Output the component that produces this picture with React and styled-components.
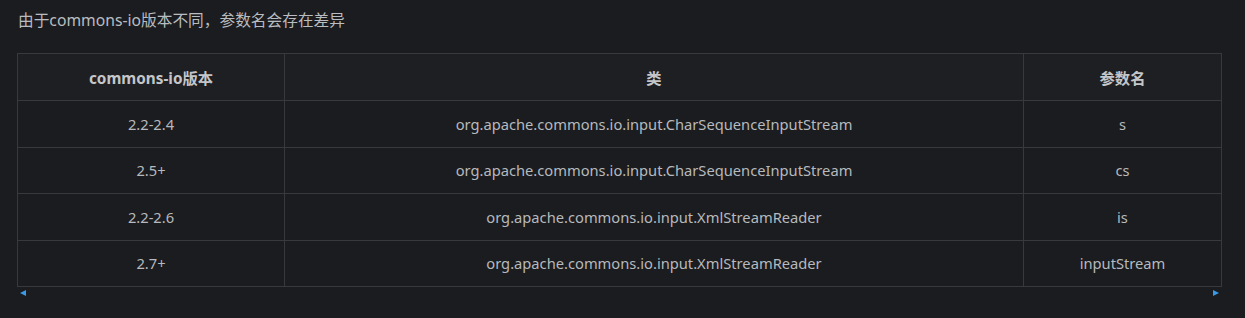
import React from 'react';
import styled, { createGlobalStyle } from 'styled-components';

const GlobalStyle = createGlobalStyle`
  html, body {
    margin: 0;
    padding: 0;
    background: #1b1c1f;
  }
  body {
    font-family: "Noto Sans", "Noto Sans CJK SC", sans-serif;
    color: #b9bcc0;
  }
`;

const Page = styled.div`
  width: 1245px;
  height: 318px;
  box-sizing: border-box;
  padding: 8px 23px 0 17px;
  background: #1b1c1f;
`;

const Intro = styled.p`
  margin: 0 0 0 1px;
  font-size: 15.7px;
  line-height: 24px;
  color: #b9bcc0;
`;

const TableWrap = styled.div`
  margin-top: 21px;
  width: 1205px;
`;

const Table = styled.table`
  width: 1205px;
  border-collapse: collapse;
  table-layout: fixed;
  font-size: 14.7px;
`;

const Th = styled.th`
  ${p => (p.w ? `width: ${p.w}px;` : '')}
  height: 46px;
  padding: 0;
  border: 1px solid #38393c;
  background: #1e1f22;
  color: #c4c6c9;
  font-size: 15.3px;
  font-weight: 700;
  text-align: center;
`;

const Td = styled.td`
  height: 45.5px;
  padding: 0;
  border: 1px solid #38393c;
  color: #b6b9bd;
  text-align: center;
`;

const ScrollBar = styled.div`
  display: flex;
  justify-content: space-between;
  align-items: center;
  height: 11px;
  padding: 0 3px;
`;

const Arrow = styled.span`
  width: 0;
  height: 0;
  border-top: 3.5px solid transparent;
  border-bottom: 3.5px solid transparent;
  ${p => (p.dir === 'left'
    ? 'border-right: 6px solid #3a9ae8;'
    : 'border-left: 6px solid #3a9ae8;')}
`;

const rows = [
  ['2.2-2.4', 'org.apache.commons.io.input.CharSequenceInputStream', 's'],
  ['2.5+', 'org.apache.commons.io.input.CharSequenceInputStream', 'cs'],
  ['2.2-2.6', 'org.apache.commons.io.input.XmlStreamReader', 'is'],
  ['2.7+', 'org.apache.commons.io.input.XmlStreamReader', 'inputStream'],
];

export default function App() {
  return (
    <Page>
      <GlobalStyle />
      <Intro>由于commons-io版本不同，参数名会存在差异</Intro>
      <TableWrap>
        <Table>
          <thead>
            <tr>
              <Th w={266}>commons-io版本</Th>
              <Th>类</Th>
              <Th w={197}>参数名</Th>
            </tr>
          </thead>
          <tbody>
            {rows.map((r, i) => (
              <tr key={i}>
                <Td>{r[0]}</Td>
                <Td>{r[1]}</Td>
                <Td>{r[2]}</Td>
              </tr>
            ))}
          </tbody>
        </Table>
        <ScrollBar>
          <Arrow dir="left" />
          <Arrow dir="right" />
        </ScrollBar>
      </TableWrap>
    </Page>
  );
}
